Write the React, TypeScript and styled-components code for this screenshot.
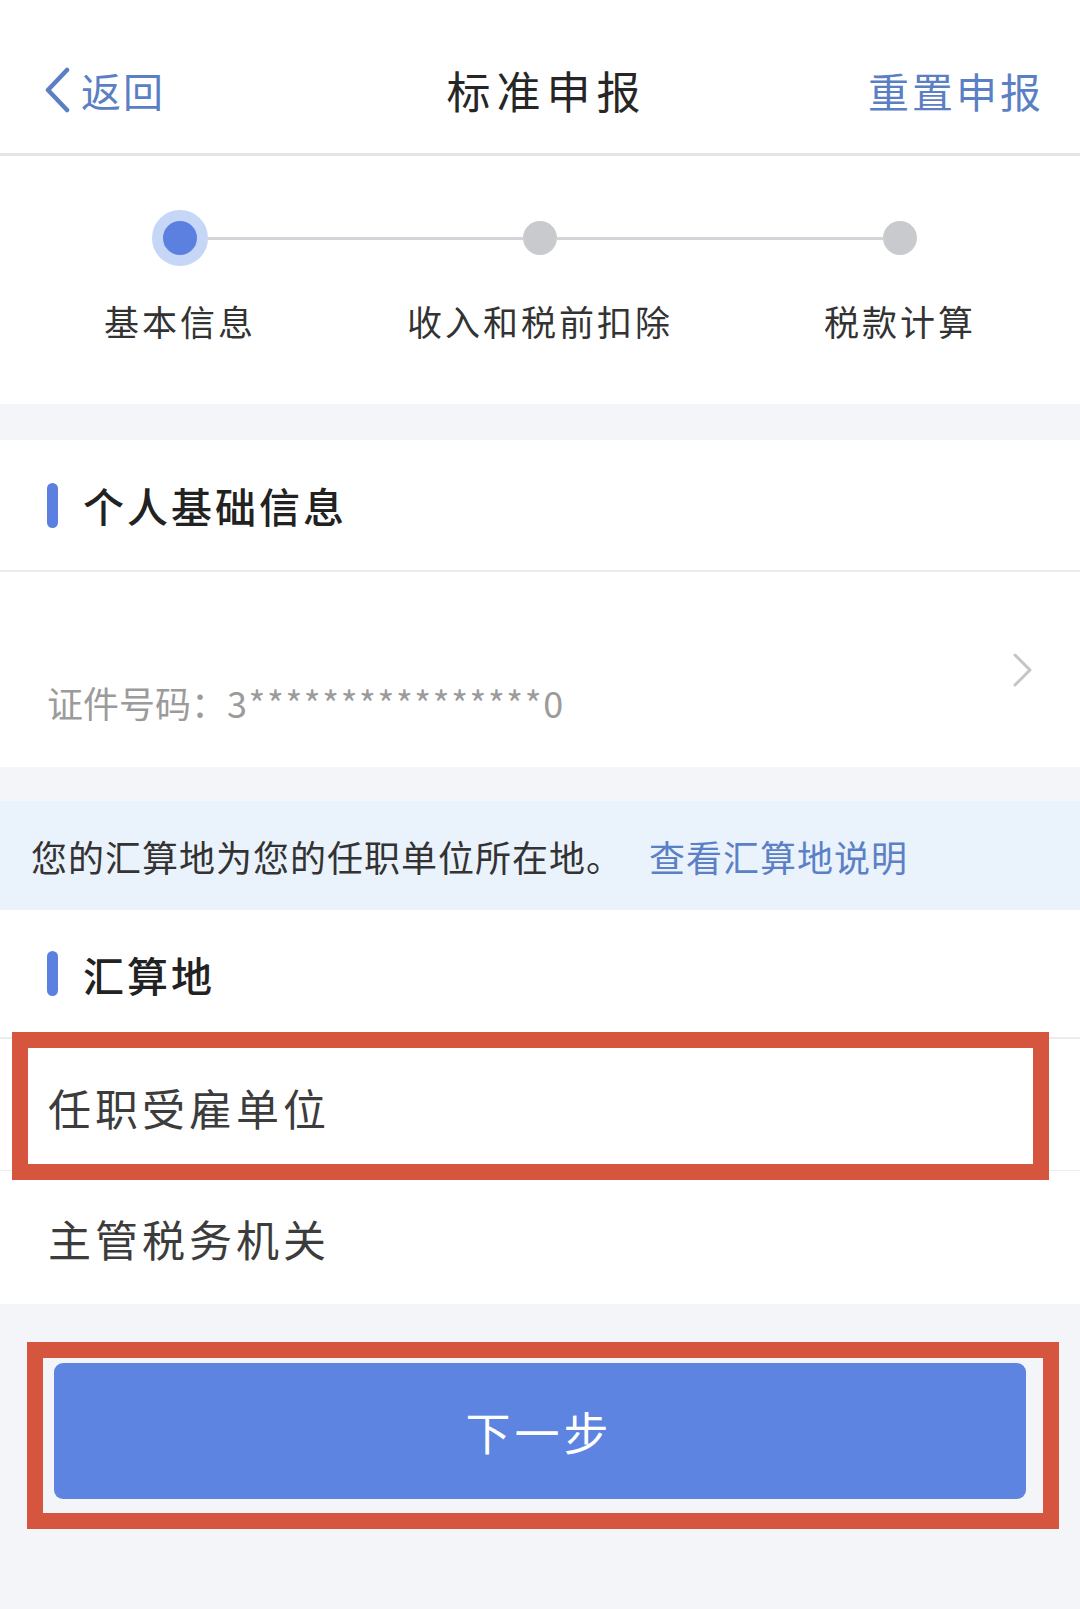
import styled, { createGlobalStyle } from 'styled-components'

const GlobalStyle = createGlobalStyle`
  html, body {
    margin: 0;
    padding: 0;
    background: #f4f5f8;
  }
  * {
    box-sizing: border-box;
  }
  body {
    font-family: 'Noto Sans CJK SC', 'Noto Sans', sans-serif;
  }
`

const Page = styled.div`
  width: 1080px;
  min-height: 1609px;
  display: flex;
  flex-direction: column;
  background: #f4f5f8;
`

const Header = styled.header`
  height: 156px;
  padding: 58px 36px 0 43px;
  display: grid;
  grid-template-columns: 1fr auto 1fr;
  align-items: start;
  background: #ffffff;
  border-bottom: 3px solid #e4e5e8;
`

const HeaderRow = styled.div`
  height: 64px;
  display: flex;
  align-items: center;
`

const BackButton = styled(HeaderRow)`
  gap: 10px;
  color: #5b7fc4;
  font-size: 40px;
  letter-spacing: 2px;
`

const Title = styled(HeaderRow)`
  color: #262626;
  font-size: 44px;
  letter-spacing: 6px;
  padding-left: 6px;
`

const ResetLink = styled(HeaderRow)`
  justify-content: flex-end;
  color: #5b7fc4;
  font-size: 41px;
  letter-spacing: 3px;
`

const Steps = styled.section`
  background: #ffffff;
  padding: 54px 0 61px;
  display: grid;
  grid-template-columns: repeat(3, 1fr);
  row-gap: 33px;
`

const DotCell = styled.div`
  height: 56px;
  display: flex;
  align-items: center;
`

const Connector = styled.div<{ $hidden?: boolean }>`
  flex: 1;
  height: 3px;
  background: ${p => (p.$hidden ? 'transparent' : '#d3d4d7')};
`

const Dot = styled.div<{ $active?: boolean }>`
  width: ${p => (p.$active ? '56px' : '34px')};
  height: ${p => (p.$active ? '56px' : '34px')};
  border-radius: 50%;
  flex-shrink: 0;
  background: ${p => (p.$active ? '#5b80e0' : '#c9cacd')};
  border: ${p => (p.$active ? '11px solid #c5d6f6' : 'none')};
`

const StepLabel = styled.div`
  text-align: center;
  font-size: 35px;
  line-height: 44px;
  letter-spacing: 3px;
  color: #333333;
`

const Card = styled.section<{ $gap?: number }>`
  margin-top: ${p => p.$gap ?? 0}px;
  background: #ffffff;
`

const CardHeader = styled.div<{ $height: number }>`
  height: ${p => p.$height}px;
  padding-left: 47px;
  display: flex;
  align-items: center;
  gap: 25px;
  border-bottom: 2px solid #ececee;
`

const TitleBar = styled.span`
  width: 11px;
  height: 45px;
  border-radius: 6px;
  background: #5b80e0;
`

const CardTitle = styled.h2`
  margin: 0;
  font-size: 41px;
  font-weight: 500;
  letter-spacing: 3px;
  color: #222222;
`

const IdRow = styled.div`
  height: 195px;
  padding: 0 46px 0 47px;
  display: flex;
  align-items: center;
  justify-content: space-between;
`

const IdText = styled.div`
  padding-top: 64px;
  font-size: 36px;
  line-height: 44px;
  color: #9b9b9b;
`

const IdNumber = styled.span`
  letter-spacing: 1.6px;
`

const Notice = styled.div`
  margin-top: 34px;
  height: 109px;
  padding-left: 31px;
  display: flex;
  align-items: center;
  background: #eaf2fb;
  font-size: 36px;
  letter-spacing: 1px;
  color: #333333;
`

const NoticeLink = styled.span`
  margin-left: 26px;
  color: #5b80c6;
`

const OptionRow = styled.div<{ $last?: boolean }>`
  position: relative;
  height: ${p => (p.$last ? 133 : 132)}px;
  padding: ${p => (p.$last ? '0 0 0 48px' : '4px 0 0 48px')};
  display: flex;
  align-items: center;
  border-bottom: ${p => (p.$last ? 'none' : '1px solid #ececee')};
  font-size: 43px;
  letter-spacing: 4px;
  color: #3c3c3c;
`

const Highlight = styled.div<{ $top: number; $right: number; $bottom: number; $left: number }>`
  position: absolute;
  top: ${p => p.$top}px;
  right: ${p => p.$right}px;
  bottom: ${p => p.$bottom}px;
  left: ${p => p.$left}px;
  border: 16px solid #d5553f;
  pointer-events: none;
`

const Footer = styled.div`
  flex: 1;
  padding: 59px 54px 0;
  background: #f4f5f8;
`

const ButtonWrap = styled.div`
  position: relative;
`

const NextButton = styled.button`
  width: 100%;
  height: 136px;
  border: none;
  border-radius: 9px;
  background: #5d84e0;
  color: #ffffff;
  font-family: 'Noto Sans CJK SC', sans-serif;
  font-size: 45px;
  letter-spacing: 4px;
  padding-left: 4px;
  cursor: pointer;
`

const ChevronLeft = () => (
  <svg width="28" height="46" viewBox="0 0 28 46" fill="none">
    <path d="M24 3 L5 23 L24 43" stroke="#5b7fc4" strokeWidth="4.5" strokeLinecap="round" strokeLinejoin="round" />
  </svg>
)

const ChevronRight = () => (
  <svg width="22" height="34" viewBox="0 0 22 34" fill="none">
    <path d="M3 2 L18 17 L3 32" stroke="#c4c5c8" strokeWidth="3" strokeLinecap="round" strokeLinejoin="round" />
  </svg>
)

const steps = ['基本信息', '收入和税前扣除', '税款计算']

export default function App() {
  return (
    <Page>
      <GlobalStyle />
      <Header>
        <BackButton>
          <ChevronLeft />
          <span>返回</span>
        </BackButton>
        <Title>标准申报</Title>
        <ResetLink>重置申报</ResetLink>
      </Header>

      <Steps>
        {steps.map((_, i) => (
          <DotCell key={'dot' + i}>
            <Connector $hidden={i === 0} />
            <Dot $active={i === 0} />
            <Connector $hidden={i === steps.length - 1} />
          </DotCell>
        ))}
        {steps.map(s => (
          <StepLabel key={s}>{s}</StepLabel>
        ))}
      </Steps>

      <Card $gap={36}>
        <CardHeader $height={132}>
          <TitleBar />
          <CardTitle>个人基础信息</CardTitle>
        </CardHeader>
        <IdRow>
          <IdText>
            证件号码：<IdNumber>3****************0</IdNumber>
          </IdText>
          <ChevronRight />
        </IdRow>
      </Card>

      <Notice>
        您的汇算地为您的任职单位所在地。
        <NoticeLink>查看汇算地说明</NoticeLink>
      </Notice>

      <Card>
        <CardHeader $height={129}>
          <TitleBar />
          <CardTitle>汇算地</CardTitle>
        </CardHeader>
        <OptionRow>
          任职受雇单位
          <Highlight $top={-7} $right={31} $bottom={-10} $left={12} />
        </OptionRow>
        <OptionRow $last>主管税务机关</OptionRow>
      </Card>

      <Footer>
        <ButtonWrap>
          <NextButton>下一步</NextButton>
          <Highlight $top={-21} $right={-33} $bottom={-30} $left={-27} />
        </ButtonWrap>
      </Footer>
    </Page>
  )
}
